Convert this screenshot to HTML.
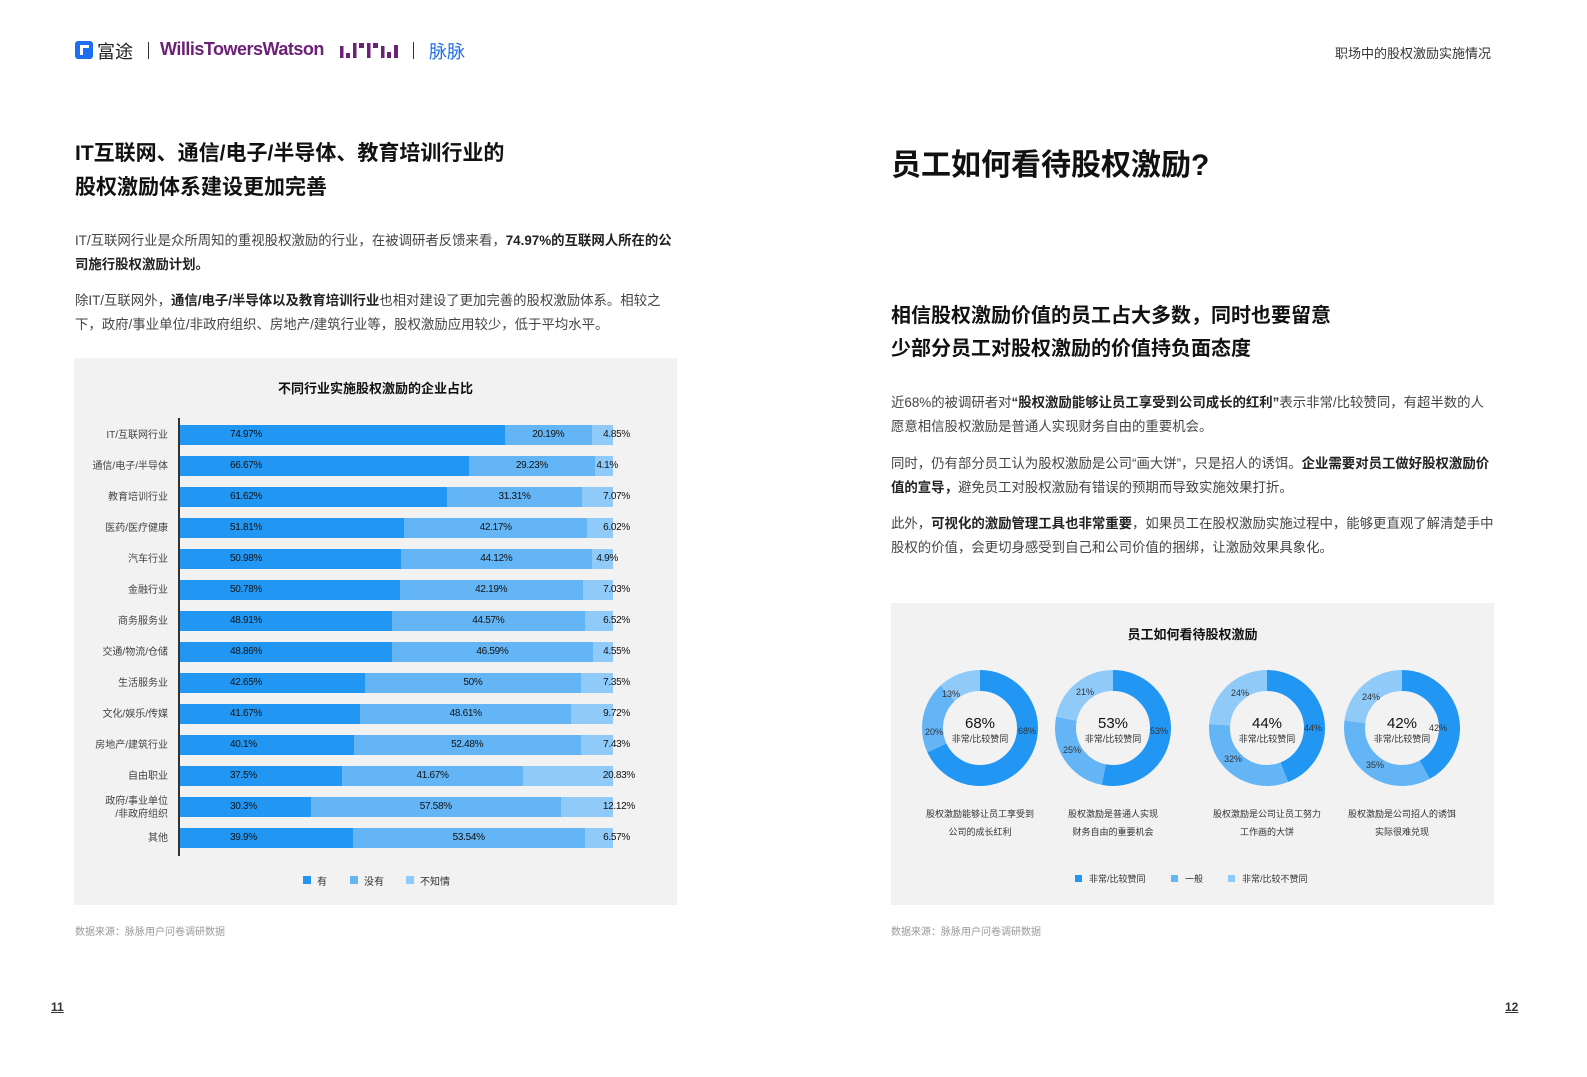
<!DOCTYPE html>
<html><head><meta charset="utf-8"><style>
*{margin:0;padding:0;box-sizing:border-box}
body{width:1587px;height:1077px;background:#fff;font-family:"Liberation Sans","Noto Sans CJK SC",sans-serif;color:#333;position:relative;overflow:hidden}
.a{position:absolute}
.t{font-weight:bold;color:#111}
p.body{font-size:13.4px;line-height:24px;color:#444}
p.body b{color:#222}
.row{position:absolute;left:180px;height:20px;width:433px;display:flex}
.s1{background:#2196f3;height:20px;position:relative}
.s2{background:#64b5f6;height:20px;position:relative}
.s3{background:#90caf9;height:20px;position:relative}
.lab{position:absolute;top:0;line-height:20px;font-size:10px;color:#111;white-space:nowrap;letter-spacing:-0.3px}
.cat{position:absolute;right:1419px;font-size:10px;color:#444;text-align:right;line-height:13px;white-space:nowrap}
</style></head><body>
<!-- header -->
<div class="a" style="left:75px;top:41px;width:18px;height:18px;background:#1e6ef0;border-radius:3px"><div style="position:absolute;left:5px;top:4px;width:9px;height:10px;border:3px solid #fff;border-right:none;border-bottom:none"></div></div>
<div class="a" style="left:97px;top:38px;font-size:18px;color:#222">富途</div>
<div class="a" style="left:148px;top:42px;width:1px;height:17px;background:#333"></div>
<div class="a" style="left:160px;top:39px;font-size:18px;font-weight:bold;color:#6d2077;letter-spacing:-0.5px">WillisTowersWatson</div>
<svg class="a" style="left:340px;top:43px" width="62" height="15" fill="#6d2077">
<rect x="0" y="3" width="3.5" height="12"/><rect x="6" y="10" width="4" height="5"/><rect x="13" y="0" width="3.5" height="15"/><rect x="19" y="0" width="5" height="5"/><rect x="27" y="0" width="3.5" height="15"/><rect x="33" y="0" width="5" height="5"/><rect x="41" y="3" width="3.5" height="12"/><rect x="47" y="9" width="4" height="6"/><rect x="54" y="2" width="4" height="13"/>
</svg>
<div class="a" style="left:413px;top:42px;width:1px;height:17px;background:#333"></div>
<div class="a" style="left:429px;top:38px;font-size:18px;color:#1e6ef0">脉脉</div>
<div class="a" style="left:1335px;top:43px;font-size:13px;color:#333">职场中的股权激励实施情况</div>

<!-- left -->
<div class="a t" style="left:75px;top:137px;font-size:21px;line-height:34px">IT互联网、通信/电子/半导体、教育培训行业的<br>股权激励体系建设更加完善</div>
<p class="a body" style="left:75px;top:229px;width:605px">IT/互联网行业是众所周知的重视股权激励的行业，在被调研者反馈来看，<b>74.97%的互联网人所在的公司施行股权激励计划。</b></p>
<p class="a body" style="left:75px;top:289px;width:605px">除IT/互联网外，<b>通信/电子/半导体以及教育培训行业</b>也相对建设了更加完善的股权激励体系。相较之下，政府/事业单位/非政府组织、房地产/建筑行业等，股权激励应用较少，低于平均水平。</p>

<div class="a" style="left:74px;top:358px;width:603px;height:547px;background:#f2f2f2"></div>
<div class="a t" style="left:74px;top:378px;width:603px;text-align:center;font-size:13px">不同行业实施股权激励的企业占比</div>
<div class="a" style="left:178px;top:418px;width:2px;height:438px;background:#333"></div>

<div class="cat" style="top:429px">IT/互联网行业</div>
<div class="row" style="top:425px"><div class="s1" style="width:74.97%"><span class="lab" style="left:50px">74.97%</span></div><div class="s2" style="width:20.19%"><span class="lab" style="left:50%;transform:translateX(-50%)">20.19%</span></div><div class="s3" style="width:4.85%"><span class="lab" style="right:-17px">4.85%</span></div></div>
<div class="cat" style="top:460px">通信/电子/半导体</div>
<div class="row" style="top:456px"><div class="s1" style="width:66.67%"><span class="lab" style="left:50px">66.67%</span></div><div class="s2" style="width:29.23%"><span class="lab" style="left:50%;transform:translateX(-50%)">29.23%</span></div><div class="s3" style="width:4.1%"><span class="lab" style="right:-5px">4.1%</span></div></div>
<div class="cat" style="top:491px">教育培训行业</div>
<div class="row" style="top:487px"><div class="s1" style="width:61.62%"><span class="lab" style="left:50px">61.62%</span></div><div class="s2" style="width:31.31%"><span class="lab" style="left:50%;transform:translateX(-50%)">31.31%</span></div><div class="s3" style="width:7.07%"><span class="lab" style="right:-17px">7.07%</span></div></div>
<div class="cat" style="top:522px">医药/医疗健康</div>
<div class="row" style="top:518px"><div class="s1" style="width:51.81%"><span class="lab" style="left:50px">51.81%</span></div><div class="s2" style="width:42.17%"><span class="lab" style="left:50%;transform:translateX(-50%)">42.17%</span></div><div class="s3" style="width:6.02%"><span class="lab" style="right:-17px">6.02%</span></div></div>
<div class="cat" style="top:553px">汽车行业</div>
<div class="row" style="top:549px"><div class="s1" style="width:50.98%"><span class="lab" style="left:50px">50.98%</span></div><div class="s2" style="width:44.12%"><span class="lab" style="left:50%;transform:translateX(-50%)">44.12%</span></div><div class="s3" style="width:4.9%"><span class="lab" style="right:-5px">4.9%</span></div></div>
<div class="cat" style="top:584px">金融行业</div>
<div class="row" style="top:580px"><div class="s1" style="width:50.78%"><span class="lab" style="left:50px">50.78%</span></div><div class="s2" style="width:42.19%"><span class="lab" style="left:50%;transform:translateX(-50%)">42.19%</span></div><div class="s3" style="width:7.03%"><span class="lab" style="right:-17px">7.03%</span></div></div>
<div class="cat" style="top:615px">商务服务业</div>
<div class="row" style="top:611px"><div class="s1" style="width:48.91%"><span class="lab" style="left:50px">48.91%</span></div><div class="s2" style="width:44.57%"><span class="lab" style="left:50%;transform:translateX(-50%)">44.57%</span></div><div class="s3" style="width:6.52%"><span class="lab" style="right:-17px">6.52%</span></div></div>
<div class="cat" style="top:646px">交通/物流/仓储</div>
<div class="row" style="top:642px"><div class="s1" style="width:48.86%"><span class="lab" style="left:50px">48.86%</span></div><div class="s2" style="width:46.59%"><span class="lab" style="left:50%;transform:translateX(-50%)">46.59%</span></div><div class="s3" style="width:4.55%"><span class="lab" style="right:-17px">4.55%</span></div></div>
<div class="cat" style="top:677px">生活服务业</div>
<div class="row" style="top:673px"><div class="s1" style="width:42.65%"><span class="lab" style="left:50px">42.65%</span></div><div class="s2" style="width:50%"><span class="lab" style="left:50%;transform:translateX(-50%)">50%</span></div><div class="s3" style="width:7.35%"><span class="lab" style="right:-17px">7.35%</span></div></div>
<div class="cat" style="top:708px">文化/娱乐/传媒</div>
<div class="row" style="top:704px"><div class="s1" style="width:41.67%"><span class="lab" style="left:50px">41.67%</span></div><div class="s2" style="width:48.61%"><span class="lab" style="left:50%;transform:translateX(-50%)">48.61%</span></div><div class="s3" style="width:9.72%"><span class="lab" style="right:-17px">9.72%</span></div></div>
<div class="cat" style="top:739px">房地产/建筑行业</div>
<div class="row" style="top:735px"><div class="s1" style="width:40.1%"><span class="lab" style="left:50px">40.1%</span></div><div class="s2" style="width:52.48%"><span class="lab" style="left:50%;transform:translateX(-50%)">52.48%</span></div><div class="s3" style="width:7.43%"><span class="lab" style="right:-17px">7.43%</span></div></div>
<div class="cat" style="top:770px">自由职业</div>
<div class="row" style="top:766px"><div class="s1" style="width:37.5%"><span class="lab" style="left:50px">37.5%</span></div><div class="s2" style="width:41.67%"><span class="lab" style="left:50%;transform:translateX(-50%)">41.67%</span></div><div class="s3" style="width:20.83%"><span class="lab" style="right:-22px">20.83%</span></div></div>
<div class="cat" style="top:795px">政府/事业单位<br>/非政府组织</div>
<div class="row" style="top:797px"><div class="s1" style="width:30.3%"><span class="lab" style="left:50px">30.3%</span></div><div class="s2" style="width:57.58%"><span class="lab" style="left:50%;transform:translateX(-50%)">57.58%</span></div><div class="s3" style="width:12.12%"><span class="lab" style="right:-22px">12.12%</span></div></div>
<div class="cat" style="top:832px">其他</div>
<div class="row" style="top:828px"><div class="s1" style="width:39.9%"><span class="lab" style="left:50px">39.9%</span></div><div class="s2" style="width:53.54%"><span class="lab" style="left:50%;transform:translateX(-50%)">53.54%</span></div><div class="s3" style="width:6.57%"><span class="lab" style="right:-17px">6.57%</span></div></div>

<div class="a" style="left:303px;top:876px;width:8px;height:8px;background:#2196f3"></div><div class="a" style="left:317px;top:873px;font-size:10px">有</div>
<div class="a" style="left:350px;top:876px;width:8px;height:8px;background:#64b5f6"></div><div class="a" style="left:364px;top:873px;font-size:10px">没有</div>
<div class="a" style="left:406px;top:876px;width:8px;height:8px;background:#90caf9"></div><div class="a" style="left:420px;top:873px;font-size:10px">不知情</div>
<div class="a" style="left:75px;top:923px;font-size:10px;color:#999">数据来源：脉脉用户问卷调研数据</div>
<div class="a" style="left:51px;top:1000px;font-size:12px;font-weight:bold;text-decoration:underline">11</div>

<!-- right -->
<div class="a t" style="left:891px;top:140px;font-size:30px">员工如何看待股权激励?</div>
<div class="a t" style="left:891px;top:300px;font-size:20px;line-height:33px">相信股权激励价值的员工占大多数，同时也要留意<br>少部分员工对股权激励的价值持负面态度</div>
<p class="a body" style="left:891px;top:391px;width:605px">近68%的被调研者对<b>“股权激励能够让员工享受到公司成长的红利”</b>表示非常/比较赞同，有超半数的人愿意相信股权激励是普通人实现财务自由的重要机会。</p>
<p class="a body" style="left:891px;top:452px;width:605px">同时，仍有部分员工认为股权激励是公司“画大饼”，只是招人的诱饵。<b>企业需要对员工做好股权激励价值的宣导，</b>避免员工对股权激励有错误的预期而导致实施效果打折。</p>
<p class="a body" style="left:891px;top:512px;width:605px">此外，<b>可视化的激励管理工具也非常重要</b>，如果员工在股权激励实施过程中，能够更直观了解清楚手中股权的价值，会更切身感受到自己和公司价值的捆绑，让激励效果具象化。</p>

<div class="a" style="left:891px;top:603px;width:603px;height:302px;background:#f2f2f2"></div>
<div class="a t" style="left:891px;top:624px;width:603px;text-align:center;font-size:13px">员工如何看待股权激励</div>
<svg class="a" style="left:891px;top:603px" width="603" height="302" font-family="Liberation Sans,Noto Sans CJK SC,sans-serif">
<g fill="none" stroke-width="21" transform="rotate(-90)">
<g transform="translate(-125,89)">
<circle r="47.5" stroke="#2196f3" stroke-dasharray="202.9 400"/>
<circle r="47.5" stroke="#64b5f6" stroke-dasharray="0 202.9 59.7 400"/>
<circle r="47.5" stroke="#90caf9" stroke-dasharray="0 262.6 35.9 400"/></g>
<g transform="translate(-125,222)">
<circle r="47.5" stroke="#2196f3" stroke-dasharray="158.2 400"/>
<circle r="47.5" stroke="#64b5f6" stroke-dasharray="0 158.2 74.6 400"/>
<circle r="47.5" stroke="#90caf9" stroke-dasharray="0 232.8 65.7 400"/></g>
<g transform="translate(-125,376)">
<circle r="47.5" stroke="#2196f3" stroke-dasharray="131.3 400"/>
<circle r="47.5" stroke="#64b5f6" stroke-dasharray="0 131.3 95.5 400"/>
<circle r="47.5" stroke="#90caf9" stroke-dasharray="0 226.8 71.6 400"/></g>
<g transform="translate(-125,511)">
<circle r="47.5" stroke="#2196f3" stroke-dasharray="125.3 400"/>
<circle r="47.5" stroke="#64b5f6" stroke-dasharray="0 125.3 104.5 400"/>
<circle r="47.5" stroke="#90caf9" stroke-dasharray="0 229.8 71.6 400"/></g>
</g>
<g font-size="15" fill="#111" text-anchor="middle">
<text x="89" y="125">68%</text><text x="222" y="125">53%</text><text x="376" y="125">44%</text><text x="511" y="125">42%</text></g>
<g font-size="9" fill="#333" text-anchor="middle">
<text x="89" y="139">非常/比较赞同</text><text x="222" y="139">非常/比较赞同</text><text x="376" y="139">非常/比较赞同</text><text x="511" y="139">非常/比较赞同</text>
<text x="60" y="94">13%</text><text x="43" y="132">20%</text><text x="136" y="131">68%</text>
<text x="194" y="92">21%</text><text x="181" y="150">25%</text><text x="268" y="131">53%</text>
<text x="349" y="93">24%</text><text x="342" y="159">32%</text><text x="422" y="128">44%</text>
<text x="480" y="97">24%</text><text x="484" y="165">35%</text><text x="547" y="128">42%</text>
<text x="89" y="214">股权激励能够让员工享受到</text><text x="89" y="232">公司的成长红利</text>
<text x="222" y="214">股权激励是普通人实现</text><text x="222" y="232">财务自由的重要机会</text>
<text x="376" y="214">股权激励是公司让员工努力</text><text x="376" y="232">工作画的大饼</text>
<text x="511" y="214">股权激励是公司招人的诱饵</text><text x="511" y="232">实际很难兑现</text>
</g>
<rect x="184" y="272" width="7" height="7" fill="#2196f3"/><text x="198" y="279" font-size="9" fill="#333">非常/比较赞同</text>
<rect x="280" y="272" width="7" height="7" fill="#64b5f6"/><text x="294" y="279" font-size="9" fill="#333">一般</text>
<rect x="337" y="272" width="7" height="7" fill="#90caf9"/><text x="351" y="279" font-size="9" fill="#333">非常/比较不赞同</text>
</svg>
<div class="a" style="left:891px;top:923px;font-size:10px;color:#999">数据来源：脉脉用户问卷调研数据</div>
<div class="a" style="left:1505px;top:1000px;font-size:12px;font-weight:bold;text-decoration:underline">12</div>
</body></html>
